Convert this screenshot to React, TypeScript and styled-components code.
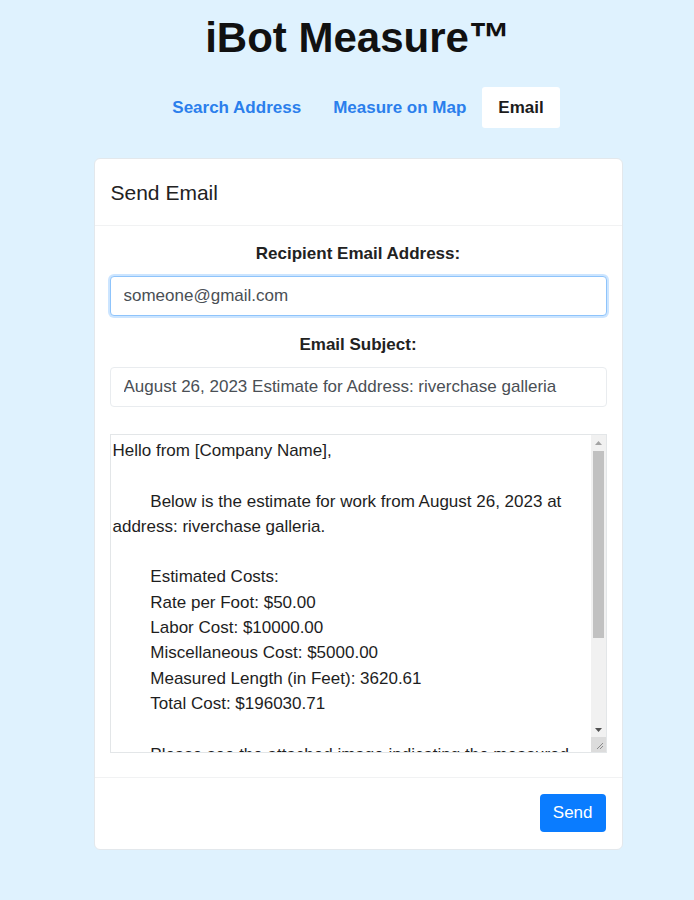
import React, { useState } from "react";
import styled, { createGlobalStyle } from "styled-components";

const GlobalStyle = createGlobalStyle`
  html, body {
    margin: 0;
    padding: 0;
    background: #dff2fe;
    font-family: "Liberation Sans", Arial, sans-serif;
  }
`;

const Page = styled.div`
  min-height: 900px;
  padding-left: 22px;
  display: flex;
  flex-direction: column;
  align-items: center;
  box-sizing: border-box;
`;

const Title = styled.h1`
  margin: 13px 0 0;
  font-size: 42px;
  line-height: 50px;
  font-weight: 700;
  color: #111;
`;

const Tabs = styled.nav`
  display: flex;
  margin-top: 24px;
`;

const Tab = styled.button<{ $active?: boolean }>`
  border: none;
  border-radius: 3px;
  padding: 10px 16px;
  font-family: inherit;
  font-size: 17px;
  line-height: 21px;
  font-weight: 700;
  cursor: pointer;
  background: ${(p) => (p.$active ? "#ffffff" : "transparent")};
  color: ${(p) => (p.$active ? "#1c1c1c" : "#2b7fec")};
`;

const Card = styled.section`
  margin-top: 30px;
  width: 529px;
  background: #fff;
  border: 1px solid #e3e8ec;
  border-radius: 6px;
  box-sizing: border-box;
`;

const CardHeader = styled.header`
  padding: 20px 16px 19px;
  font-size: 21px;
  line-height: 27px;
  color: #222;
  border-bottom: 1px solid #f1f2f3;
`;

const CardBody = styled.div`
  padding: 16px 15px 24px;
  display: flex;
  flex-direction: column;
`;

const Label = styled.label`
  display: block;
  text-align: center;
  font-size: 17px;
  line-height: 24px;
  font-weight: 700;
  color: #222;
  margin-bottom: 10px;
`;

const Field = styled.div`
  & + & {
    margin-top: 17px;
  }
`;

const Input = styled.input<{ $focused?: boolean }>`
  display: block;
  width: 100%;
  height: 40px;
  box-sizing: border-box;
  padding: 0 13px;
  font-family: inherit;
  font-size: 17px;
  color: #4a4f55;
  border-radius: 4px;
  border: 1px solid ${(p) => (p.$focused ? "#8fc4fb" : "#e9ecef")};
  box-shadow: ${(p) => (p.$focused ? "0 0 0 2px rgba(0, 123, 255, 0.2)" : "none")};
  outline: none;
`;

const MessageBox = styled.div`
  margin-top: 27px;
  height: 319px;
  display: flex;
  border: 1px solid #e3e6e8;
  box-sizing: border-box;
`;

const Message = styled.textarea`
  flex: 1;
  min-width: 0;
  border: none;
  padding: 3px 2px 2px;
  font-family: inherit;
  font-size: 17px;
  line-height: 25.3px;
  color: #1e1e1e;
  tab-size: 8;
  resize: none;
  overflow: hidden;
  outline: none;
`;

const ScrollBar = styled.div`
  width: 15px;
  display: flex;
  flex-direction: column;
  background: #f1f1f1;
`;

const ScrollButton = styled.div`
  height: 15px;
  display: flex;
  align-items: center;
  justify-content: center;
`;

const ScrollTrack = styled.div`
  flex: 1;
  padding: 1px 2px 0;
`;

const ScrollThumb = styled.div`
  height: 187px;
  background: #c1c1c1;
`;

const Resizer = styled.div`
  height: 15px;
  background: #dcdcdc;
  display: flex;
  align-items: center;
  justify-content: center;
`;

const CardFooter = styled.footer`
  padding: 16px 16px 17px;
  display: flex;
  justify-content: flex-end;
  border-top: 1px solid #f1f2f3;
`;

const SendButton = styled.button`
  border: none;
  border-radius: 4px;
  background: #0a7cff;
  color: #fff;
  font-family: inherit;
  font-size: 17px;
  line-height: 24px;
  padding: 7px 13px;
  cursor: pointer;
`;

const Arrow = ({ up, color }: { up?: boolean; color: string }) => (
  <svg width="7" height="4" viewBox="0 0 7 4">
    <path d={up ? "M0 4 L3.5 0 L7 4 Z" : "M0 0 L3.5 4 L7 0 Z"} fill={color} />
  </svg>
);

const Grip = () => (
  <svg width="11" height="11" viewBox="0 0 11 11">
    <path d="M10 4 L4 10 M10 7 L7 10" stroke="#8a8a8a" strokeWidth="1" />
  </svg>
);

const body = `Hello from [Company Name],

\tBelow is the estimate for work from August 26, 2023 at address: riverchase galleria.

\tEstimated Costs:
\tRate per Foot: $50.00
\tLabor Cost: $10000.00
\tMiscellaneous Cost: $5000.00
\tMeasured Length (in Feet): 3620.61
\tTotal Cost: $196030.71

\tPlease see the attached image indicating the measured area for this estimate.

Thank you for your business!

Sincerely,
[Company Name]
[Phone Number]`;

export default function App() {
  const [tab, setTab] = useState("email");
  const [to, setTo] = useState("someone@gmail.com");
  const [subject, setSubject] = useState(
    "August 26, 2023 Estimate for Address: riverchase galleria"
  );
  const [text, setText] = useState(body);

  return (
    <>
      <GlobalStyle />
      <Page>
        <Title>iBot Measure™</Title>
        <Tabs>
          <Tab $active={tab === "search"} onClick={() => setTab("search")}>
            Search Address
          </Tab>
          <Tab $active={tab === "map"} onClick={() => setTab("map")}>
            Measure on Map
          </Tab>
          <Tab $active={tab === "email"} onClick={() => setTab("email")}>
            Email
          </Tab>
        </Tabs>
        <Card>
          <CardHeader>Send Email</CardHeader>
          <CardBody>
            <Field>
              <Label htmlFor="to">Recipient Email Address:</Label>
              <Input id="to" $focused value={to} onChange={(e) => setTo(e.target.value)} />
            </Field>
            <Field>
              <Label htmlFor="subject">Email Subject:</Label>
              <Input
                id="subject"
                value={subject}
                onChange={(e) => setSubject(e.target.value)}
              />
            </Field>
            <MessageBox>
              <Message value={text} onChange={(e) => setText(e.target.value)} />
              <ScrollBar>
                <ScrollButton>
                  <Arrow up color="#a3a3a3" />
                </ScrollButton>
                <ScrollTrack>
                  <ScrollThumb />
                </ScrollTrack>
                <ScrollButton>
                  <Arrow color="#505050" />
                </ScrollButton>
                <Resizer>
                  <Grip />
                </Resizer>
              </ScrollBar>
            </MessageBox>
          </CardBody>
          <CardFooter>
            <SendButton>Send</SendButton>
          </CardFooter>
        </Card>
      </Page>
    </>
  );
}
